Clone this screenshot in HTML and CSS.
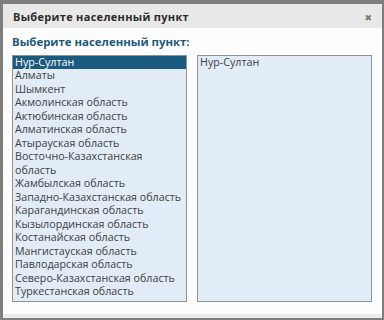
FILE: index.html
```html
<!DOCTYPE html>
<html lang="ru">
<head>
<meta charset="utf-8">
<link rel="stylesheet" href="styles.css">
</head>
<body>
<div class="dialog">
  <div class="titlebar">
    <span class="title">Выберите населенный пункт</span>
    <span class="close">&#x2716;</span>
  </div>
  <div class="content">
    <h2 class="heading">Выберите населенный пункт:</h2>
    <div class="boxes">
      <div class="list">
        <div class="item selected">Нур-Султан</div>
        <div class="item">Алматы</div>
        <div class="item">Шымкент</div>
        <div class="item">Акмолинская область</div>
        <div class="item">Актюбинская область</div>
        <div class="item">Алматинская область</div>
        <div class="item">Атырауская область</div>
        <div class="item">Восточно-Казахстанская область</div>
        <div class="item">Жамбылская область</div>
        <div class="item">Западно-Казахстанская область</div>
        <div class="item">Карагандинская область</div>
        <div class="item">Кызылординская область</div>
        <div class="item">Костанайская область</div>
        <div class="item">Мангистауская область</div>
        <div class="item">Павлодарская область</div>
        <div class="item">Северо-Казахстанская область</div>
        <div class="item">Туркестанская область</div>
      </div>
      <div class="list">
        <div class="item">Нур-Султан</div>
      </div>
    </div>
  </div>
</div>
</body>
</html>
```
FILE: styles.css
```css
html, body {
  margin: 0;
  padding: 0;
}
body {
  background: #7e7e7e;
  width: 384px;
  height: 320px;
  overflow: hidden;
  font-family: "Open Sans", "DejaVu Sans", sans-serif;
}
.dialog {
  margin: 4px 2px 0 3px;
  width: 379px;
  height: 310px;
  background: #fdfdfd;
  border-bottom: 4px solid #ececec;
}
.titlebar {
  height: 24px;
  background: #e8e8e8;
  display: flex;
  align-items: center;
  justify-content: space-between;
  padding: 0 10px 0 10px;
}
.title {
  font-size: 11px;
  font-weight: bold;
  color: #2b2b2b;
  letter-spacing: 0.3px;
  padding-top: 1px;
}
.close {
  font-size: 9px;
  color: #7a7a7a;
  padding-top: 3px;
}
.content {
  padding: 6px 10px 0 9px;
}
.heading {
  margin: 0 0 5px 0;
  font-size: 11.4px;
  font-weight: bold;
  color: #1d5a7c;
  line-height: 16px;
}
.boxes {
  display: flex;
  gap: 10px;
}
.list {
  width: 175px;
  height: 247px;
  box-sizing: border-box;
  border: 1px solid #8a9298;
  background: #e2ecf6;
  padding-top: 0;
}
.item {
  font-size: 10.7px;
  line-height: 13.5px;
  color: #404040;
  padding-left: 2px;
}
.item.selected {
  background: #1b5a80;
  color: #fff;
  line-height: 12px;
  padding-bottom: 1px;
}
```
